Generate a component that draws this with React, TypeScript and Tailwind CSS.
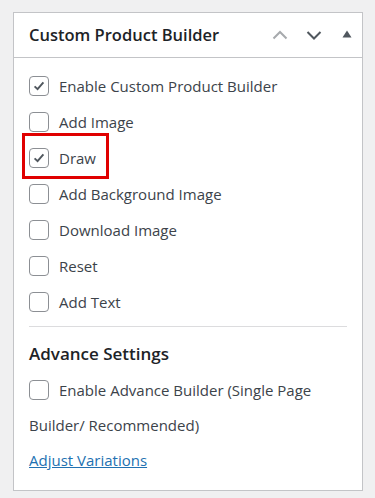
import React from "react";

const font = { fontFamily: '"Open Sans", "Noto Sans", sans-serif' };

function Box({ checked }: { checked?: boolean }) {
  return (
    <span className="inline-flex h-[20px] w-[20px] shrink-0 items-center justify-center rounded-[4px] border border-[#8c8f94] bg-white align-middle">
      {checked && (
        <svg viewBox="0 0 20 20" className="h-[16px] w-[16px]">
          <path d="M4.5 10.5 L8.2 14 L15.5 5.5" fill="none" stroke="#50575e" strokeWidth="2.4" />
        </svg>
      )}
    </span>
  );
}

function Row({ label, checked }: { label: string; checked?: boolean }) {
  return (
    <div className="flex h-[36px] items-center gap-[10px]">
      <Box checked={checked} />
      <span>{label}</span>
    </div>
  );
}

export default function App() {
  return (
    <div className="h-[498px] overflow-hidden bg-[#f0f0f1] pt-[12px] pl-[13px]" style={font}>
      <div className="h-[479px] w-[350px] border border-[#c3c4c7] bg-white text-[15px] text-[#3c434a]">
        <div className="flex h-[45px] items-center border-b border-[#c3c4c7] pl-[15px] pr-[10px]">
          <h2 className="flex-1 text-[16.5px] font-semibold leading-[24px] text-[#1d2327]">Custom Product Builder</h2>
          <svg viewBox="0 0 16 16" className="mr-[18px] h-[16px] w-[16px]">
            <path d="M1.5 11.5 L8 5 L14.5 11.5" fill="none" stroke="#a7aaad" strokeWidth="2" />
          </svg>
          <svg viewBox="0 0 16 16" className="mr-[20px] h-[16px] w-[16px]">
            <path d="M1.5 5 L8 11.5 L14.5 5" fill="none" stroke="#50575e" strokeWidth="2" />
          </svg>
          <svg viewBox="0 0 10 8" className="mb-[3px] h-[8px] w-[10px]">
            <path d="M5 0.5 L9.5 7.5 L0.5 7.5 Z" fill="#50575e" />
          </svg>
        </div>
        <div className="px-[15px] pt-[10px]">
          <Row label="Enable Custom Product Builder" checked />
          <Row label="Add Image" />
          <div className="relative">
            <Row label="Draw" checked />
            <span className="absolute top-[-7px] left-[-7px] h-[46px] w-[87px] border-[3px] border-[#e00000]" />
          </div>
          <Row label="Add Background Image" />
          <Row label="Download Image" />
          <Row label="Reset" />
          <Row label="Add Text" />
          <div className="mt-[6px] border-t border-[#dcdcde]" />
          <h3 className="mt-[15px] text-[17px] font-semibold leading-[24px] text-[#1d2327]">Advance Settings</h3>
          <p className="mt-[7px] leading-[35px]">
            <span className="mr-[10px] inline-flex align-[-4px]"><Box /></span>
            Enable Advance Builder (Single Page Builder/ Recommended)
          </p>
          <a href="#" className="block leading-[34px] text-[#2271b1] underline">Adjust Variations</a>
        </div>
      </div>
    </div>
  );
}
